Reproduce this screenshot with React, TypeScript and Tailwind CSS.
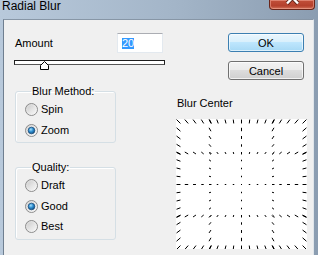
import React from "react";

function Radio({ checked, id }: { checked?: boolean; id: string }) {
  return (
    <svg width="13" height="13" viewBox="0 0 13 13" className="shrink-0">
      <defs>
        <linearGradient id={`rg${id}`} x1="0" y1="0" x2="1" y2="1">
          <stop offset="0" stopColor="#c4c4c4" />
          <stop offset="0.55" stopColor="#e6e6e6" />
          <stop offset="1" stopColor="#fbfbfb" />
        </linearGradient>
        <radialGradient id={`rb${id}`} cx="40%" cy="35%" r="75%">
          <stop offset="0" stopColor="#a8e0fb" />
          <stop offset="0.45" stopColor="#2e8fd2" />
          <stop offset="1" stopColor="#0f3f6c" />
        </radialGradient>
      </defs>
      <circle cx="6.5" cy="6.5" r="6" fill={`url(#rg${id})`} stroke="#8d8d8d" strokeWidth="1" />
      <circle cx="6.5" cy="6.5" r="4.8" fill="none" stroke="#f4f4f4" strokeWidth="0.6" opacity="0.7" />
      {checked && (
        <circle cx="6.5" cy="6.5" r="3.3" fill={`url(#rb${id})`} stroke="#1d4f7e" strokeWidth="0.8" />
      )}
    </svg>
  );
}

function RadioRow({ label, checked, id }: { label: string; checked?: boolean; id: string }) {
  return (
    <div className="flex items-center h-[15px] gap-[3px]">
      <Radio checked={checked} id={id} />
      <span className="leading-[15px]">{label}</span>
    </div>
  );
}

function BlurCenter() {
  const c = 65.5;
  const grid = [2.5, 34, 65.5, 97, 128.5];
  const samples: number[] = [];
  for (let i = 0; i <= 16; i++) samples.push(Math.round(2 + (126 * i) / 16) + 0.5);
  const pts = new Map<string, [number, number]>();
  grid.forEach((g) => {
    samples.forEach((t) => {
      pts.set(`${t.toFixed(2)},${g.toFixed(2)}`, [t, g]);
      pts.set(`${g.toFixed(2)},${t.toFixed(2)}`, [g, t]);
    });
  });
  const lines: React.ReactNode[] = [];
  let k = 0;
  pts.forEach(([x, y]) => {
    const dx = x - c;
    const dy = y - c;
    const d = Math.hypot(dx, dy);
    if (d < 0.5) {
      lines.push(<rect key={k++} x={x - 0.5} y={y - 0.5} width={1} height={1} fill="#000" />);
      return;
    }
    const L = Math.max(1.5, d * 0.062);
    const ux = dx / d;
    const uy = dy / d;
    lines.push(
      <line
        key={k++}
        x1={x - (ux * L) / 2}
        y1={y - (uy * L) / 2}
        x2={x + (ux * L) / 2}
        y2={y + (uy * L) / 2}
        stroke="#000"
        strokeWidth={1}
      />
    );
  });
  return (
    <svg width="131" height="130" viewBox="0 0 131 130" className="block bg-white">
      {lines}
    </svg>
  );
}

export default function App() {
  return (
    <div className="w-[318px] h-[255px] overflow-hidden flex flex-col bg-[linear-gradient(to_right,#b8c9db,#a3b5c8_55%,#8b9db1)] font-['Liberation_Sans',Arial,sans-serif] text-[11px] text-black">
      {/* title bar */}
      <div className="h-[19px] shrink-0 relative">
        <div className="pl-[2px] -mt-[1px] text-[12px] leading-[14px] text-black">Radial Blur</div>
        <div className="absolute right-[3px] top-0 w-[46px] h-[10px] rounded-b-[4px] border border-t-0 border-[#6a2519] bg-[linear-gradient(to_bottom,#c2503b,#b4402c_65%,#d2745c)] shadow-[inset_0_0_0_1px_rgba(255,190,175,0.45)] overflow-hidden">
          <svg width="46" height="10" viewBox="0 0 46 10" className="block">
            <line x1="17" y1="-8" x2="28" y2="3.5" stroke="#5a2116" strokeWidth="4" />
            <line x1="28" y1="-8" x2="17" y2="3.5" stroke="#5a2116" strokeWidth="4" />
            <line x1="17" y1="-8" x2="28" y2="3.5" stroke="#ffffff" strokeWidth="2.4" />
            <line x1="28" y1="-8" x2="17" y2="3.5" stroke="#ffffff" strokeWidth="2.4" />
          </svg>
        </div>
      </div>

      {/* content */}
      <div className="flex-1 flex ml-[3px] mr-[4px] bg-[#f0f0f0] border-t border-l border-r border-t-[#8796a6] border-l-[#6f7f90] border-r-[#dfe5ea]">
        {/* left column */}
        <div className="w-[151px] ml-[10px] pt-[13px] flex flex-col">
          <div className="flex items-center h-[20px]">
            <span className="pl-[1px] leading-[14px]">Amount</span>
            <div className="ml-auto mr-[2px] w-[46px] h-[20px] bg-white border border-[#e3e9ef] border-t-[#abadb3] flex items-center pl-[4px]">
              <span className="bg-[#3399ff] text-white leading-[11px] h-[11px] px-[0px]">20</span>
            </div>
          </div>
          <div className="mt-[7px] relative h-[11px]">
            <div className="h-[5px] w-[151px] bg-white border border-[#1e1e1e] border-b-[#555555]" />
            <svg width="10" height="10" viewBox="0 0 10 10" className="absolute left-[26px] top-[1px]">
              <polygon points="4.5,0.5 8.5,4.5 8.5,8.5 0.5,8.5 0.5,4.5" fill="#ffffff" stroke="#000000" strokeWidth="1" />
            </svg>
          </div>

          <fieldset className="mt-[13px] ml-[1px] w-[101px] border border-[#d5dfe5] rounded-[3px] shadow-[inset_1px_1px_0_#ffffff] pl-[9px] pr-[4px] pt-[4px] pb-[4px] flex flex-col gap-[6px]">
            <legend className="ml-[6px] px-[1px] leading-[14px]">Blur Method:</legend>
            <RadioRow label="Spin" id="spin" />
            <RadioRow label="Zoom" id="zoom" checked />
          </fieldset>

          <fieldset className="mt-[17px] ml-[1px] w-[101px] border border-[#d5dfe5] rounded-[3px] shadow-[inset_1px_1px_0_#ffffff] pl-[9px] pr-[4px] pt-[4px] pb-[5px] flex flex-col gap-[5.5px]">
            <legend className="ml-[6px] px-[1px] leading-[14px]">Quality:</legend>
            <RadioRow label="Draft" id="draft" />
            <RadioRow label="Good" id="good" checked />
            <RadioRow label="Best" id="best" />
          </fieldset>
        </div>

        {/* right column */}
        <div className="ml-[11px] w-[132px] pt-[13px] flex flex-col">
          <button className="ml-[52px] w-[76px] h-[19px] rounded-[3px] border border-[#3c7fb1] bg-[linear-gradient(to_bottom,#eaf6fd_0%,#d9f0fc_45%,#bee6fd_50%,#a7d9f5_100%)] shadow-[inset_0_0_0_1px_rgba(255,255,255,0.6)] flex items-center justify-center leading-[14px]">
            OK
          </button>
          <button className="mt-[9px] ml-[52px] w-[76px] h-[19px] rounded-[3px] border border-[#707070] bg-[linear-gradient(to_bottom,#f2f2f2_0%,#ebebeb_45%,#dddddd_50%,#cfcfcf_100%)] shadow-[inset_0_0_0_1px_rgba(255,255,255,0.7)] flex items-center justify-center leading-[14px]">
            Cancel
          </button>
          <div className="mt-[16px] pl-[1px] leading-[14px]">Blur Center</div>
          <div className="mt-[9px]">
            <BlurCenter />
          </div>
        </div>
      </div>
    </div>
  );
}
